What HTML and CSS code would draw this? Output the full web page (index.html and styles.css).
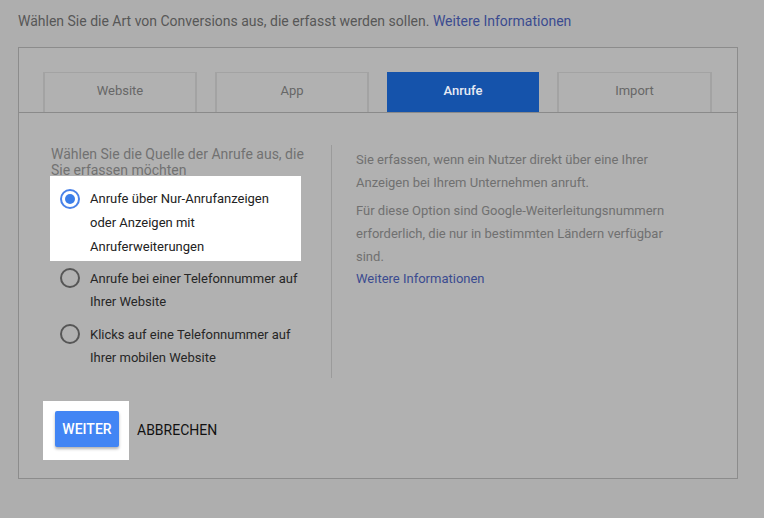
FILE: index.html
```html
<!DOCTYPE html>
<html lang="de">
<head>
<meta charset="utf-8">
<title>Conversions</title>
<link rel="stylesheet" href="styles.css">
</head>
<body>
<p class="intro">Wählen Sie die Art von Conversions aus, die erfasst werden sollen. <a class="link" href="#">Weitere Informationen</a></p>
<div class="panel">
  <div class="tabs">
    <div class="tab">Website</div>
    <div class="tab">App</div>
    <div class="tab active">Anrufe</div>
    <div class="tab last">Import</div>
  </div>
  <div class="content">
    <div class="left">
      <p class="question">Wählen Sie die Quelle der Anrufe aus, die<br>Sie erfassen möchten</p>
      <div class="opt selected">
        <span class="radio on"></span>
        <span class="label">Anrufe über Nur-Anrufanzeigen<br>oder Anzeigen mit<br>Anruferweiterungen</span>
      </div>
      <div class="opt second">
        <span class="radio"></span>
        <span class="label">Anrufe bei einer Telefonnummer auf<br>Ihrer Website</span>
      </div>
      <div class="opt third">
        <span class="radio"></span>
        <span class="label">Klicks auf eine Telefonnummer auf<br>Ihrer mobilen Website</span>
      </div>
    </div>
    <div class="divider"></div>
    <div class="right">
      <p class="para">Sie erfassen, wenn ein Nutzer direkt über eine Ihrer<br>Anzeigen bei Ihrem Unternehmen anruft.</p>
      <p class="para second-para">Für diese Option sind Google-Weiterleitungsnummern<br>erforderlich, die nur in bestimmten Ländern verfügbar<br>sind.</p>
      <a class="link more" href="#">Weitere Informationen</a>
    </div>
  </div>
  <div class="actions">
    <div class="hl"><button class="primary">WEITER</button></div>
    <button class="cancel">ABBRECHEN</button>
  </div>
</div>
</body>
</html>
```

FILE: styles.css
```css
html, body {
  margin: 0;
  padding: 0;
}
body {
  background: #aeaeae;
  font-family: Roboto, "Liberation Sans", Arial, sans-serif;
  width: 764px;
  height: 518px;
  overflow: hidden;
}
.intro {
  margin: 0;
  padding: 11px 18px 16px;
  font-size: 14px;
  line-height: 20px;
  color: #575757;
  white-space: nowrap;
}
.link {
  color: #3b4b90;
  text-decoration: none;
}
.panel {
  margin-left: 18px;
  width: 720px;
  height: 432px;
  box-sizing: border-box;
  border: 1px solid #8c8c8c;
  background: #b1b1b1;
}
.tabs {
  display: flex;
  gap: 18px;
  padding: 24px 24px 0;
  border-bottom: 1px solid #8a8a8a;
}
.tab {
  width: 154px;
  height: 40px;
  box-sizing: border-box;
  border: 2px solid #a3a3a3;
  border-top-width: 1px;
  border-bottom: 0;
  display: flex;
  align-items: center;
  justify-content: center;
  font-size: 13px;
  color: #676767;
  padding-bottom: 5px;
}
.tab.active {
  width: 152px;
  background: #1553ab;
  border-color: #1553ab;
  color: #e6eaf4;
  font-weight: 500;
}
.tab.last {
  width: 155px;
}
.content {
  display: flex;
  align-items: flex-start;
  padding: 32px 0 0 32px;
}
.left {
  width: 280px;
  padding-top: 1px;
}
.question {
  margin: 0;
  font-size: 14px;
  line-height: 16px;
  color: #717171;
  white-space: nowrap;
}
.opt {
  display: flex;
  align-items: flex-start;
  gap: 10px;
  font-size: 13px;
  line-height: 23px;
  color: #262626;
  white-space: nowrap;
}
.opt.selected {
  background: #ffffff;
  width: 251px;
  box-sizing: border-box;
  margin: -2px 0 0 -1px;
  padding: 11px 0 2px 10px;
  line-height: 24px;
  color: #222222;
}
.opt.second {
  margin-top: 6px;
  padding-left: 9px;
}
.opt.third {
  margin-top: 10px;
  padding-left: 9px;
}
.radio {
  flex: none;
  width: 20px;
  height: 20px;
  margin-top: 1px;
  box-sizing: border-box;
  border: 2px solid #565656;
  border-radius: 50%;
  position: relative;
}
.opt.selected .radio {
  margin-top: 2px;
}
.radio.on {
  border-color: #4a82e8;
}
.radio.on::after {
  content: "";
  position: absolute;
  left: 3px;
  top: 3px;
  width: 10px;
  height: 10px;
  border-radius: 50%;
  background: #3b7ee9;
}
.divider {
  width: 1px;
  height: 233px;
  background: #9b9b9b;
}
.right {
  padding: 3px 0 0 24px;
  font-size: 13px;
  color: #707070;
  white-space: nowrap;
}
.para {
  margin: 0;
  line-height: 23px;
}
.second-para {
  margin-top: 5px;
}
.more {
  display: block;
  line-height: 20px;
  margin-top: 1px;
  font-size: 13px;
}
.actions {
  display: flex;
  align-items: center;
  gap: 8px;
  margin: 23px 0 0 24px;
}
.hl {
  background: #ffffff;
  padding: 10px 10px 13px 12px;
}
.primary {
  display: block;
  width: 64px;
  height: 36px;
  border: 0;
  border-radius: 2px;
  background: #4285f4;
  color: #ffffff;
  font-family: Roboto, "Liberation Sans", Arial, sans-serif;
  font-size: 14px;
  font-weight: 500;
  padding: 0;
  box-shadow: 0 2px 3px rgba(0, 0, 0, 0.3);
}
.cancel {
  border: 0;
  background: transparent;
  padding: 0;
  margin-top: -2px;
  font-family: Roboto, "Liberation Sans", Arial, sans-serif;
  font-size: 14px;
  color: #111111;
}
```
